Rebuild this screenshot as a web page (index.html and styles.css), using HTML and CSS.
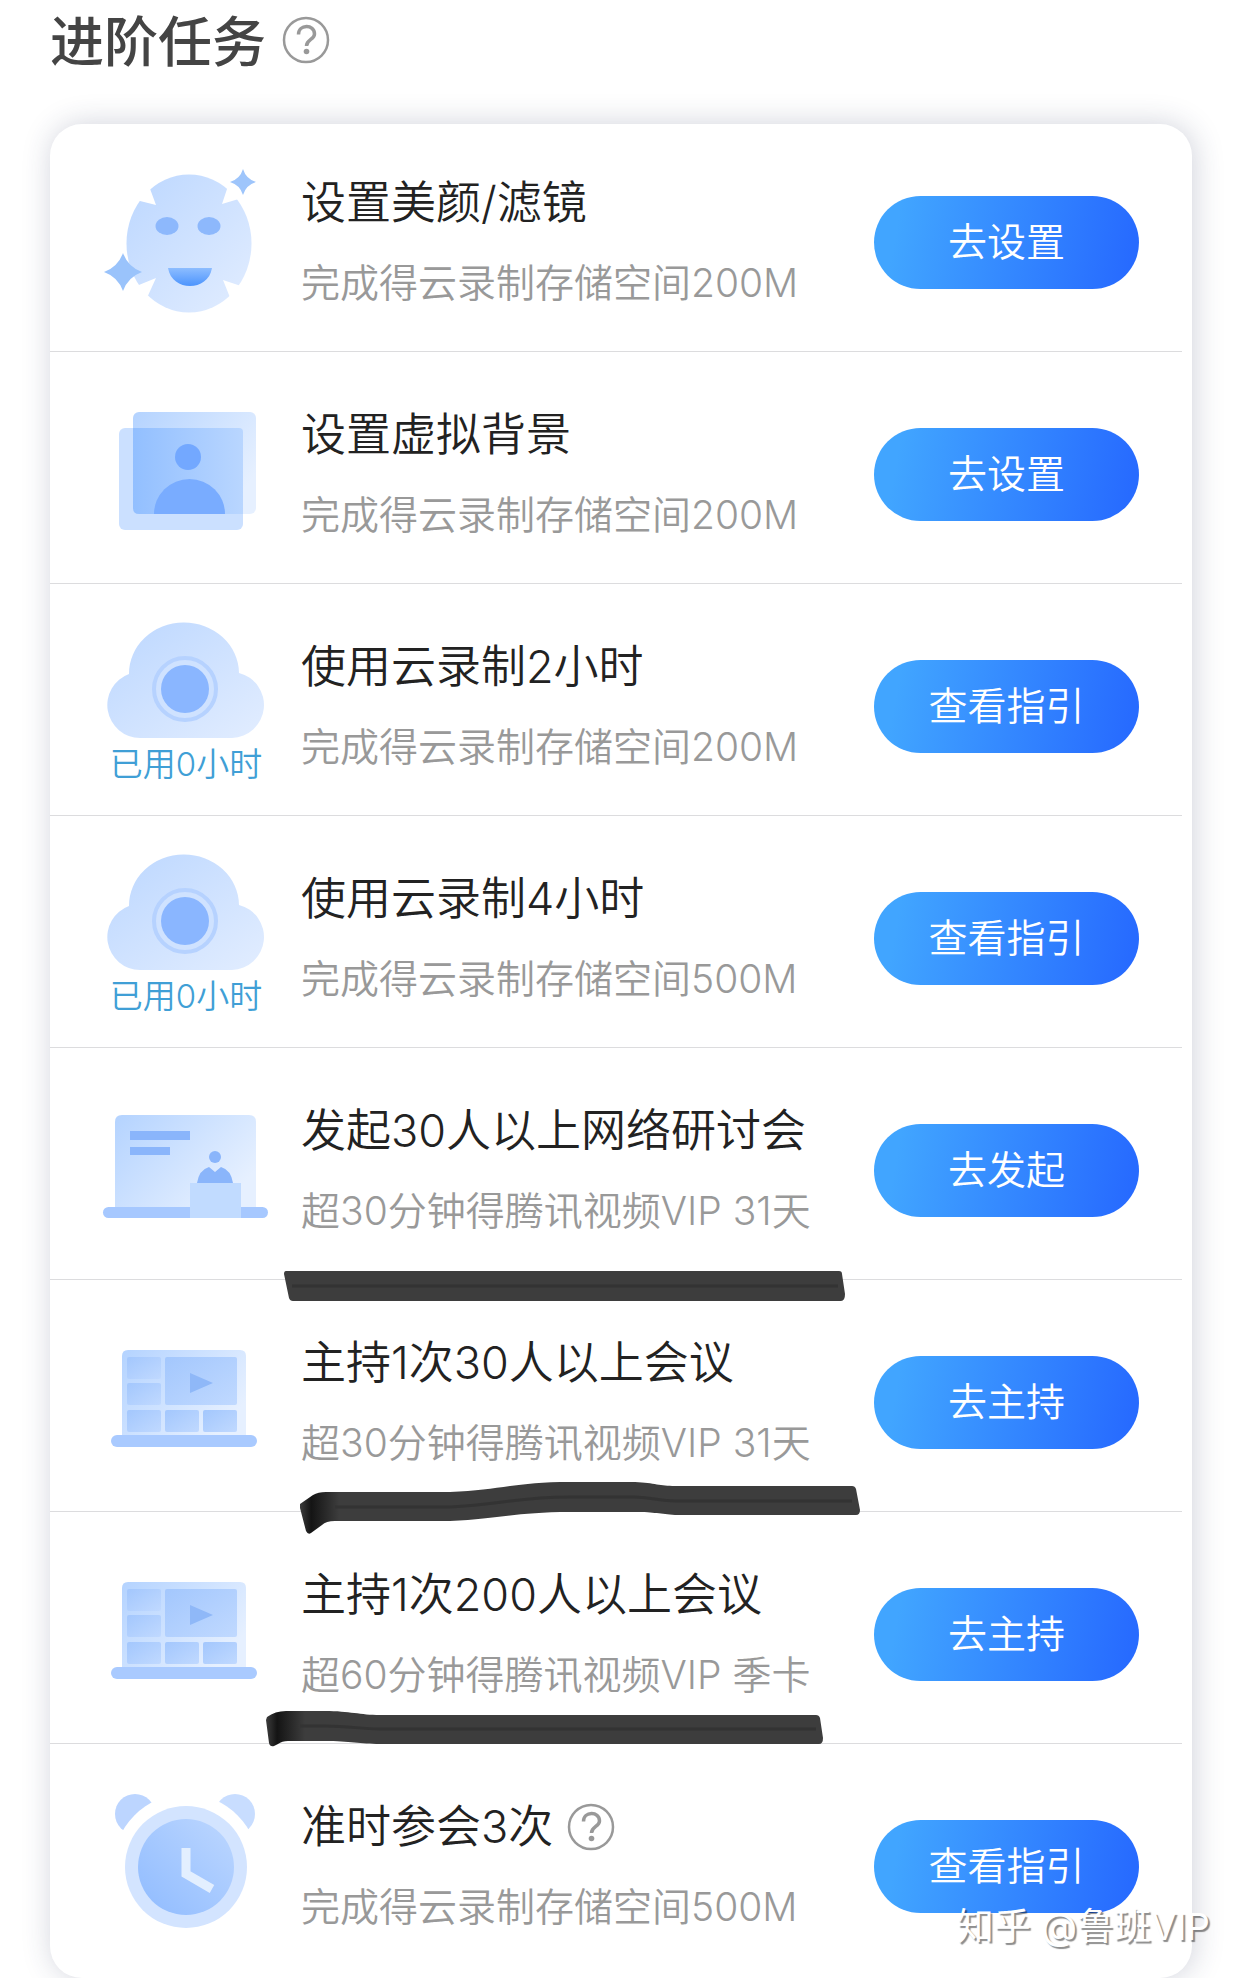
FILE: index.html
```html
<!DOCTYPE html>
<html lang="zh-CN">
  <head>
    <meta charset="UTF-8" />
    <meta name="viewport" content="width=device-width, initial-scale=1" />
    <title>进阶任务</title>
    <link rel="stylesheet" href="styles.css">
  </head>
  <body>
    <!-- shared gradients and icons -->
    <svg class="defs" aria-hidden="true">
      <defs>
        <linearGradient id="pale" x1="0" y1="0" x2="1" y2="1">
          <stop offset="0" stop-color="#bcd7ff" />
          <stop offset="1" stop-color="#e2edff" />
        </linearGradient>
        <linearGradient id="screen" x1="0" y1="0" x2="1" y2="0.6">
          <stop offset="0" stop-color="#b4d3ff" />
          <stop offset="1" stop-color="#e6f0ff" />
        </linearGradient>
        <linearGradient id="mid" x1="0" y1="0" x2="1" y2="0">
          <stop offset="0" stop-color="#92bfff" />
          <stop offset="1" stop-color="#b9d6ff" />
        </linearGradient>
        <linearGradient id="tile" x1="0" y1="0" x2="1" y2="1">
          <stop offset="0" stop-color="#a3c7fd" />
          <stop offset="1" stop-color="#c0d9ff" />
        </linearGradient>
        <linearGradient id="dial" x1="0" y1="1" x2="1" y2="0">
          <stop offset="0" stop-color="#8fbbff" />
          <stop offset="1" stop-color="#bdd7ff" />
        </linearGradient>
        <linearGradient id="mouth" x1="0" y1="0" x2="0" y2="1">
          <stop offset="0" stop-color="#8dbdff" />
          <stop offset="1" stop-color="#4c94fd" />
        </linearGradient>
        <linearGradient id="tip" x1="0" y1="0" x2="1" y2="0">
          <stop offset="0" stop-color="#3d3d3d" />
          <stop offset="0.02" stop-color="#141414" />
          <stop offset="0.07" stop-color="#3d3d3d" />
        </linearGradient>
      </defs>
      <symbol id="help" viewBox="0 0 48 48">
        <circle cx="24" cy="24" r="22" fill="none" stroke="#999" stroke-width="2.5" />
        <path d="M16.500 18.500C16.500 8 32.500 8 32.500 18C32.500 23.500 24.500 23.500 24.500 30" fill="none" stroke="#999" stroke-width="3.500" />
        <circle cx="24.500" cy="35.500" r="2.800" fill="#999" />
      </symbol>
      <symbol id="cloud" viewBox="0 0 172 120">
        <path d="M40 118A33 33 0 0 1 29 54A55 51 0 0 1 139 53A33 33 0 0 1 132 118Z" fill="url(#pale)" />
        <circle cx="85" cy="69" r="31" fill="#cfe2ff" stroke="#b6d2ff" stroke-width="4" />
        <circle cx="85" cy="69" r="24" fill="#8ab6ff" />
      </symbol>
      <symbol id="laptop" viewBox="0 0 172 168">
        <path d="M22 119V40Q22 34 28 34H140Q146 34 146 40V119Z" fill="url(#screen)" />
        <g fill="url(#tile)">
          <rect x="27" y="41" width="34" height="22" rx="2" />
          <rect x="27" y="67" width="34" height="22" rx="2" />
          <rect x="27" y="94" width="34" height="22" rx="2" />
          <rect x="65" y="41" width="72" height="48" rx="2" />
          <rect x="65" y="94" width="34" height="22" rx="2" />
          <rect x="103" y="94" width="34" height="22" rx="2" />
        </g>
        <path d="M90 57L113 67L90 77Z" fill="#8fb8f8" />
        <rect x="11" y="119" width="146" height="12" rx="6" fill="#a9caff" />
      </symbol>
    </svg>

    <main class="page">
      <header class="heading">
        <h1>进阶任务</h1>
        <a class="help" href="#help" aria-label="帮助"><svg><use href="#help" /></svg></a>
      </header>

      <ul class="tasks">
        <li class="task">
          <div class="icon">
            <svg viewBox="0 0 172 168">
              <ellipse cx="89" cy="87.500" rx="62.500" ry="69" fill="url(#pale)" />
              <path d="M56 49L49 30L36 44ZM122 48L128 30L142 42ZM56 122L34 131L46 144ZM123 124L131 144L144 131Z" fill="#fff" />
              <ellipse cx="67" cy="70" rx="11.500" ry="9" fill="#8db8fc" />
              <ellipse cx="109" cy="70" rx="11.500" ry="9" fill="#8db8fc" />
              <path d="M68 112H112C108 136 72 136 68 112Z" fill="url(#mouth)" />
              <path d="M143 13Q146 23 156 26Q146 29 143 39Q140 29 130 26Q140 23 143 13Z" fill="#9ec5fb" />
              <path d="M23 97Q28 111 42 116Q28 121 23 135Q18 121 4 116Q18 111 23 97Z" fill="#9ac3fb" />
            </svg>
          </div>
          <div class="text">
            <h2>设置美颜/滤镜</h2>
            <p>完成得云录制存储空间200M</p>
          </div>
          <button class="go" type="button">去设置</button>
        </li>

        <li class="task">
          <div class="icon">
            <svg viewBox="0 0 172 168">
              <rect x="33" y="24" width="123" height="102" rx="6" fill="url(#screen)" />
              <rect x="19" y="40" width="124" height="102" rx="6" fill="#cbe0ff" />
              <path d="M33 40H139Q143 40 143 44V126H39Q33 126 33 120Z" fill="url(#mid)" />
              <circle cx="88" cy="69" r="13" fill="#73a8ff" />
              <path d="M54 126A35.500 35 0 0 1 125 126Z" fill="#79acff" />
            </svg>
          </div>
          <div class="text">
            <h2>设置虚拟背景</h2>
            <p>完成得云录制存储空间200M</p>
          </div>
          <button class="go" type="button">去设置</button>
        </li>

        <li class="task">
          <div class="icon">
            <svg class="short"><use href="#cloud" /></svg>
            <span class="used">已用0小时</span>
          </div>
          <div class="text">
            <h2>使用云录制2小时</h2>
            <p>完成得云录制存储空间200M</p>
          </div>
          <button class="go" type="button">查看指引</button>
        </li>

        <li class="task">
          <div class="icon">
            <svg class="short"><use href="#cloud" /></svg>
            <span class="used">已用0小时</span>
          </div>
          <div class="text">
            <h2>使用云录制4小时</h2>
            <p>完成得云录制存储空间500M</p>
          </div>
          <button class="go" type="button">查看指引</button>
        </li>

        <li class="task">
          <div class="icon">
            <svg viewBox="0 0 172 168">
              <path d="M15 123V38Q15 31 22 31H149Q156 31 156 38V123Z" fill="url(#screen)" />
              <rect x="30" y="47" width="60" height="9" fill="#8ab5fb" />
              <rect x="30" y="63" width="40" height="8" fill="#8ab5fb" />
              <rect x="3" y="123" width="165" height="11" rx="5.500" fill="#a6c8ff" />
              <circle cx="115" cy="73" r="6" fill="#8ab5fb" />
              <path d="M97 99Q99 86 109 83L115 88L121 83Q131 86 133 99Z" fill="#8ab5fb" />
              <rect x="90" y="99" width="51" height="35" fill="#c1dbff" />
            </svg>
          </div>
          <div class="text">
            <h2>发起30人以上网络研讨会</h2>
            <p>超30分钟得腾讯视频VIP 31天</p>
          </div>
          <button class="go" type="button">去发起</button>
          <svg class="marker" viewBox="0 0 640 100" aria-hidden="true">
            <path d="M36 51H589Q592 51 592 54L595 74Q595 81 591 81H43Q40 81 39 78L34 54Q34 51 36 51Z" fill="#3d3d3d" />
            <path d="M42 66H588" />
          </svg>
        </li>

        <li class="task">
          <div class="icon"><svg><use href="#laptop" /></svg></div>
          <div class="text">
            <h2>主持1次30人以上会议</h2>
            <p>超30分钟得腾讯视频VIP 31天</p>
          </div>
          <button class="go" type="button">去主持</button>
          <svg class="marker" viewBox="0 0 640 100" aria-hidden="true">
            <path d="M50 52L63 43Q68 40 76 40H200C250 38 265 30 320 30H385C405 31 410 34 425 34H602Q605 34 606 37L610 58Q610 63 606 63H425C410 62 405 60 385 60H320C265 60 250 67 200 69H85Q76 69 72 73L61 81Q58 83 56 79L50 56Z" fill="url(#tip)" />
            <path d="M85 55H200C250 53 265 45 320 45H385C405 46 410 49 425 49H602" />
          </svg>
        </li>

        <li class="task">
          <div class="icon"><svg><use href="#laptop" /></svg></div>
          <div class="text">
            <h2>主持1次200人以上会议</h2>
            <p>超60分钟得腾讯视频VIP 季卡</p>
          </div>
          <button class="go" type="button">去主持</button>
          <svg class="marker" viewBox="0 0 640 100" aria-hidden="true">
            <path d="M17 33Q25 27 36 27H75C100 27 110 31 130 31H566Q569 31 570 34L573 54Q573 60 569 60H130C110 60 100 57 75 57H38Q32 57 28 60L24 62Q20 63 19 59L16 36Z" fill="url(#tip)" />
            <path d="M50 42H75C100 42 110 45 130 45H566" />
          </svg>
        </li>

        <li class="task">
          <div class="icon">
            <svg viewBox="0 0 172 168">
              <circle cx="35" cy="34" r="20" fill="#bcd5ff" />
              <circle cx="135" cy="34" r="20" fill="#c8ddff" />
              <circle cx="86" cy="87" r="73" fill="#fff" />
              <circle cx="86" cy="87" r="61" fill="#d3e4ff" />
              <circle cx="86" cy="87" r="48" fill="url(#dial)" />
              <path d="M86 68V94L112 109" fill="none" stroke="#e3efff" stroke-width="9" />
            </svg>
          </div>
          <div class="text">
            <h2>准时参会3次 <a class="help" href="#help" aria-label="帮助"><svg><use href="#help" /></svg></a></h2>
            <p>完成得云录制存储空间500M</p>
          </div>
          <button class="go" type="button">查看指引</button>
          <span class="watermark">知乎 @鲁班VIP</span>
        </li>
      </ul>
    </main>
  </body>
</html>
```
FILE: styles.css
```css
* {
  box-sizing: border-box;
}
body {
  margin: 0;
  background: #fff;
  color: #222;
  font-family: Inter, "Noto Sans CJK SC", sans-serif;
  font-weight: 350;
}
h1, h2, p, ul {
  margin: 0;
  padding: 0;
  font-weight: inherit;
}
.defs {
  position: absolute;
  width: 0;
  height: 0;
}
.page {
  padding: 0 50px;
}
.heading {
  display: flex;
  align-items: center;
  gap: 16px;
  height: 124px;
  padding-bottom: 44px;
}
.heading h1 {
  padding-top: 6px;
  color: #444;
  font-size: 54px;
  font-weight: 500;
  line-height: 74px;
}
.help {
  display: flex;
}
.help svg {
  width: 48px;
  height: 48px;
}

/* task list */
.tasks {
  list-style: none;
  background: #fff;
  border-radius: 32px;
  box-shadow: 2px 0 30px rgba(40, 50, 90, 0.22);
}
.task {
  position: relative;
  display: flex;
  align-items: flex-start;
  min-height: 232px;
  padding: 36px 53px 0 50px;
}
.task:first-child {
  min-height: 228px;
  padding-top: 32px;
}
.task:not(:last-child)::after {
  content: "";
  position: absolute;
  left: 0;
  right: 10px;
  bottom: 0;
  height: 1px;
  background: #dcdcde;
}
.task:last-child {
  min-height: 234px;
}
.icon {
  display: flex;
  flex-direction: column;
  flex: none;
  width: 172px;
  margin-right: 29px;
}
.icon svg {
  width: 172px;
  height: 168px;
}
.icon .short {
  height: 120px;
}
.used {
  color: #409fd6;
  font-size: 33px;
  line-height: 48px;
  text-align: center;
  white-space: nowrap;
}
.text {
  flex: 1;
  padding-top: 19px;
  white-space: nowrap;
}
.text h2 {
  display: flex;
  align-items: center;
  gap: 14px;
  font-size: 45px;
  line-height: 56px;
}
.text p {
  margin-top: 27px;
  color: #999;
  font-size: 39px;
  line-height: 50px;
}
.go {
  flex: none;
  width: 265px;
  height: 93px;
  margin-top: 40px;
  padding: 0 0 8px;
  border: none;
  border-radius: 47px;
  background: linear-gradient(100deg, #41a5ff 10%, #276bff 95%);
  color: #fff;
  font: inherit;
  font-size: 39px;
}

/* pen strokes across the dividers */
.marker {
  position: absolute;
  z-index: 1;
  left: 200px;
  bottom: -40px;
  width: 640px;
  height: 100px;
  pointer-events: none;
}
.marker path + path {
  fill: none;
  stroke: #333;
  stroke-width: 3;
}
.watermark {
  position: absolute;
  right: -18px;
  bottom: 27px;
  color: #fff;
  font-size: 37px;
  font-weight: 400;
  line-height: 48px;
  text-shadow: 2px 2px 1px rgba(0, 0, 0, 0.45);
  white-space: nowrap;
}
```
